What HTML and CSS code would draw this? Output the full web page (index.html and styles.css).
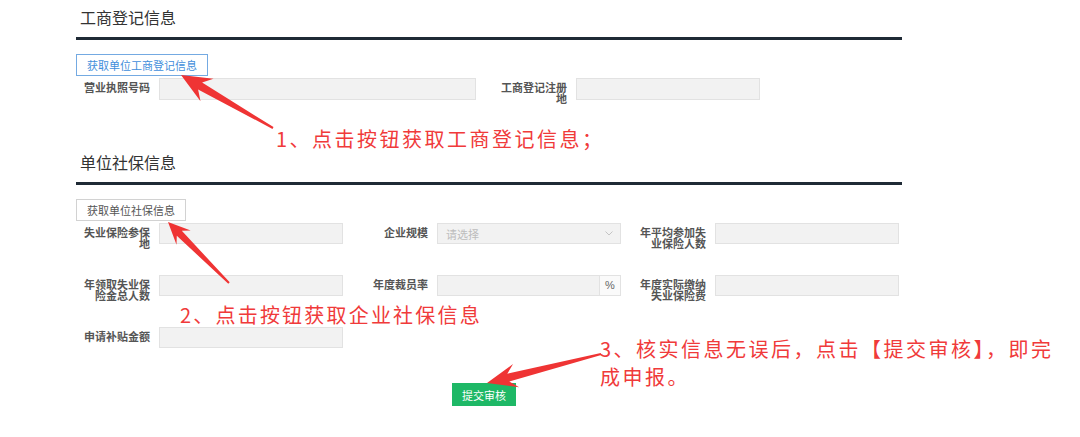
FILE: index.html
```html
<!DOCTYPE html>
<html lang="zh-CN">
<head>
  <meta charset="UTF-8" />
  <meta name="viewport" content="width=device-width, initial-scale=1.0"/>
  <title>单位信息填报</title>
  <link rel="stylesheet" href="styles.css">
</head>
<body>
  <div class="page">
    <!-- 工商登记信息 -->
    <h2 class="section-title">工商登记信息</h2>
    <button class="fetch-btn fetch-btn-blue">获取单位工商登记信息</button>
    <div class="row-first">
      <div class="field field-wide">
        <label>营业执照号码</label>
        <input type="text" />
      </div>
      <div class="field field-right">
        <label>工商登记注册地</label>
        <input type="text" />
      </div>
    </div>

    <!-- 单位社保信息 -->
    <h2 class="section-title section-two">单位社保信息</h2>
    <button class="fetch-btn">获取单位社保信息</button>
    <div class="form-grid">
      <div class="field">
        <label>失业保险参保地</label>
        <input type="text" />
      </div>
      <div class="field">
        <label>企业规模</label>
        <div class="select">
          <span>请选择</span>
          <svg width="8" height="5" viewBox="0 0 8 5"><path d="M0.5 0.5 L4 4 L7.5 0.5" fill="none" stroke="#c4c4c4" stroke-width="1"/></svg>
        </div>
      </div>
      <div class="field">
        <label>年平均参加失业保险人数</label>
        <input type="text" />
      </div>

      <div class="field">
        <label>年领取失业保险金总人数</label>
        <input type="text" />
      </div>
      <div class="field">
        <label>年度裁员率</label>
        <div class="input-group">
          <input type="text" />
          <span class="addon">%</span>
        </div>
      </div>
      <div class="field">
        <label>年度实际缴纳失业保险费</label>
        <input type="text" />
      </div>

      <div class="field">
        <label>申请补贴金额</label>
        <input type="text" />
      </div>
    </div>

    <div class="actions">
      <button class="submit-btn">提交审核</button>
    </div>
  </div>

  <!-- 操作说明 -->
  <p class="note note-1">1、点击按钮获取工商登记信息；</p>
  <p class="note note-2">2、点击按钮获取企业社保信息</p>
  <p class="note note-3">3、核实信息无误后，点击【提交审核】，即完成申报。</p>

  <svg class="arrows" width="1080" height="437" viewBox="0 0 1080 437">
    <polygon points="273.5,127.1 202.1,82.5 213.5,78.7 181,75 200.5,101.3 198.1,89.5 272.5,128.9" />
    <polygon points="229.7,282.3 181.8,230.8 190.7,230.5 168,222 176.5,244.7 176.8,235.8 228.3,283.7" />
    <polygon points="600.8,353 507.3,373.7 513.1,364 487,383 519.1,387.2 509.3,381.5 601.2,355" />
  </svg>
</body>
</html>
```

FILE: styles.css
```css
body {
  margin: 0;
  background: #fff;
  font-family: "Liberation Sans", "Noto Sans CJK SC", sans-serif;
  color: #333;
  position: relative;
  width: 1080px;
  height: 437px;
  overflow: hidden;
}

.page {
  margin-left: 76px;
  width: 826px;
}

.section-title {
  margin: 0;
  padding: 8px 0 7px 4px;
  font-size: 16px;
  line-height: 22px;
  font-weight: normal;
  color: #333;
  border-bottom: 3px solid #1f2a35;
}

.section-two {
  margin-top: 45px;
}

button {
  font-family: inherit;
  cursor: pointer;
}

.fetch-btn {
  display: block;
  margin-top: 14px;
  height: 22px;
  padding: 0 10px;
  font-size: 11px;
  color: #555;
  background: #fff;
  border: 1px solid #d2d2d2;
}

.fetch-btn-blue {
  color: #3f8edb;
  border-color: #74aae2;
}

.row-first {
  display: flex;
  margin-top: 2px;
  height: 22px;
}

.field {
  display: flex;
  align-items: flex-start;
  gap: 9px;
  height: 100%;
}

.field label {
  flex: 0 0 74px;
  padding-top: 5px;
  font-size: 11px;
  line-height: 11px;
  font-weight: bold;
  color: #555;
  text-align: right;
}

.field input,
.select,
.input-group {
  box-sizing: border-box;
  width: 184px;
  height: 100%;
  margin: 0;
  border: 1px solid #e2e2e2;
  background: #f2f2f2;
  font-family: inherit;
}

.field-wide input {
  width: 317px;
}

.field-right {
  margin-left: 17px;
}

.form-grid {
  display: grid;
  grid-template-columns: repeat(3, 267px);
  grid-auto-rows: 21px;
  column-gap: 11px;
  row-gap: 31px;
  margin-top: 2px;
}

.select {
  display: flex;
  align-items: center;
  justify-content: space-between;
  padding: 0 7px 0 8px;
  font-size: 11px;
  color: #bdbdbd;
}

.input-group {
  display: flex;
  background: #f2f2f2;
}

.input-group input {
  flex: 1;
  width: auto;
  min-width: 0;
  border: none;
  height: 100%;
}

.addon {
  flex: 0 0 20px;
  border-left: 1px solid #e2e2e2;
  background: #fafafa;
  font-size: 11px;
  color: #666;
  text-align: center;
  line-height: 19px;
}

.actions {
  margin-top: 35px;
  padding-right: 10px;
  text-align: center;
}

.submit-btn {
  height: 23px;
  padding: 0 10px;
  border: none;
  background: #1eb866;
  color: #fff;
  font-size: 11px;
}

.note {
  position: absolute;
  margin: 0;
  font-family: "Noto Sans CJK SC", sans-serif;
  font-size: 20px;
  line-height: 24px;
  letter-spacing: 2.5px;
  color: #f03a3a;
  white-space: nowrap;
}

.note-1 {
  left: 276px;
  top: 127px;
}

.note-2 {
  left: 180px;
  top: 303px;
  letter-spacing: 2.2px;
}

.note-3 {
  left: 600px;
  top: 335px;
  width: 470px;
  line-height: 28px;
  white-space: normal;
}

.arrows {
  position: absolute;
  top: 0;
  left: 0;
  pointer-events: none;
  fill: #ef3434;
}
```
